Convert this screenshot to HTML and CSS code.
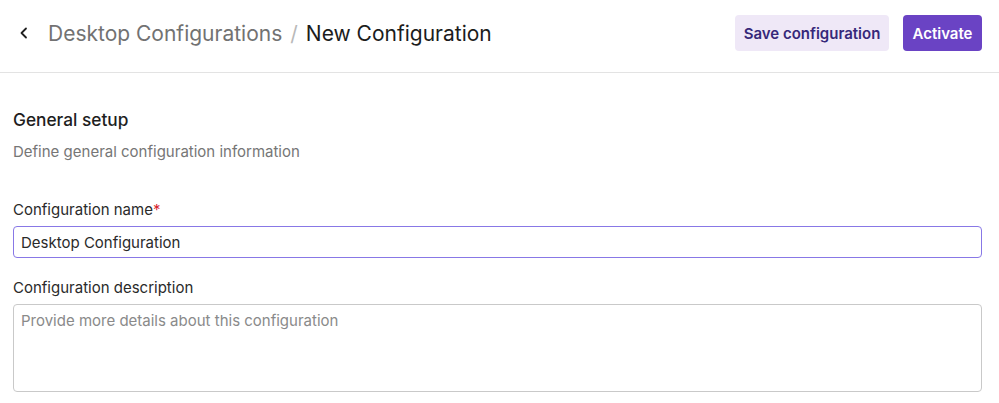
FILE: index.html
```html
<!DOCTYPE html>
<html lang="en">
<head>
<meta charset="utf-8">
<title>New Configuration</title>
<link rel="stylesheet" href="styles.css">
</head>
<body>
<header class="topbar">
  <div class="crumbs">
    <button class="back" aria-label="Back">
      <svg width="10" height="12" viewBox="0 0 10 12"><path d="M7 1.5 L2.5 6 L7 10.5" fill="none" stroke="#1f1f1f" stroke-width="1.8" stroke-linecap="round" stroke-linejoin="round"/></svg>
    </button>
    <span class="crumb-parent">Desktop Configurations</span>
    <span class="crumb-sep">/</span>
    <span class="crumb-current">New Configuration</span>
  </div>
  <div class="actions">
    <button class="btn btn-secondary">Save configuration</button>
    <button class="btn btn-primary">Activate</button>
  </div>
</header>
<main class="content">
  <h2 class="section-title">General setup</h2>
  <p class="section-desc">Define general configuration information</p>
  <div class="field">
    <label class="field-label">Configuration name<span class="req">*</span></label>
    <input class="input input-focus" type="text" value="Desktop Configuration">
  </div>
  <div class="field">
    <label class="field-label">Configuration description</label>
    <textarea class="input textarea" placeholder="Provide more details about this configuration"></textarea>
  </div>
</main>
</body>
</html>
```
FILE: styles.css
```css
* { box-sizing: border-box; }
html, body { margin: 0; padding: 0; background: #fff; }
body {
  font-family: Inter, "Noto Sans", sans-serif;
  color: #1f1f1f;
}
.topbar {
  height: 73px;
  border-bottom: 1px solid #e3e3e3;
  display: flex;
  align-items: center;
  justify-content: space-between;
  padding: 15px 17px 21px 18px;
}
.crumbs {
  display: flex;
  align-items: center;
  font-size: 21px;
}
.back {
  border: 0;
  background: none;
  padding: 0;
  width: 12px;
  height: 20px;
  display: flex;
  align-items: center;
  justify-content: center;
  margin-right: 18px;
  cursor: pointer;
}
.crumb-parent { color: #727272; }
.crumb-sep { color: #b9b9b9; margin: 0 8px; }
.crumb-current { color: #1c1c1c; }
.actions { display: flex; gap: 14px; }
.btn {
  height: 36px;
  border: 0;
  border-radius: 4px;
  font-family: inherit;
  font-size: 15px;
  font-weight: 600;
  padding: 0;
  cursor: pointer;
}
.btn-secondary { background: #efe8f7; color: #36287a; width: 154px; }
.btn-primary { background: #6a43c4; color: #fff; width: 79px; }
.content { padding: 35px 17px 0 13px; }
.section-title {
  margin: 0;
  font-size: 17.3px;
  font-weight: 500;
  line-height: 24px;
  color: #1e1e1e;
}
.section-desc {
  margin: 10px 0 0;
  font-size: 15px;
  line-height: 20px;
  color: #767676;
}
.field { margin-top: 38px; }
.field + .field { margin-top: 20px; }
.field-label {
  display: block;
  font-size: 15px;
  line-height: 20px;
  color: #2a2a2a;
  margin-bottom: 6px;
}
.req { color: #d8262f; }
.input {
  display: block;
  width: 100%;
  font-family: inherit;
  font-size: 15px;
  color: #2a2a2a;
  border: 1px solid #c9c9c9;
  border-radius: 4px;
  background: #fff;
  padding: 0 7px;
  outline: none;
}
.input-focus { height: 32px; border: 1.5px solid #8878e6; }
.textarea {
  height: 88px;
  padding: 6px 7px;
  resize: none;
  line-height: 20px;
}
.textarea::placeholder { color: #8a8a8a; }
```
